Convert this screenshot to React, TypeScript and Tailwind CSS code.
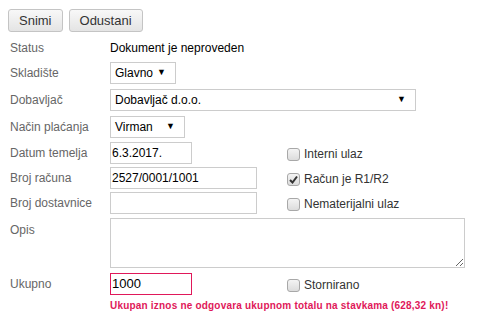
import type { ReactNode } from "react";

function Label({ children }: { children: ReactNode }) {
  return <div className="w-[102px] shrink-0 pl-[2px] text-[#666]">{children}</div>;
}

function Select({ value, width }: { value: string; width: string }) {
  return (
    <div className={`flex h-[22px] items-center justify-between border border-[#ccc] bg-white pl-[4px] pr-[9px] text-black ${width}`}>
      <span>{value}</span>
      <span className="text-[9px]">▼</span>
    </div>
  );
}

function Input({ value = "", width, error = false }: { value?: string; width: string; error?: boolean }) {
  return (
    <div
      className={`flex h-[22px] items-center border pl-[1px] text-black ${width} ${
        error ? "border-[#e0185a] text-[13px]" : "border-[#ccc]"
      }`}
    >
      {value}
    </div>
  );
}

function Check({ label, checked = false }: { label: string; checked?: boolean }) {
  return (
    <div className="flex items-center gap-[4px] text-[#333]">
      <span className="flex h-[13px] w-[13px] items-center justify-center rounded-[3px] border border-[#a8a8a8] bg-gradient-to-b from-[#f4f4f4] to-[#dcdcdc]">
        {checked && (
          <svg width="9" height="9" viewBox="0 0 9 9">
            <path d="M1 5 L3.5 7.5 L8 1.5" fill="none" stroke="#333" strokeWidth="2" />
          </svg>
        )}
      </span>
      {label}
    </div>
  );
}

export default function App() {
  return (
    <div className="h-[322px] w-[482px] bg-white pl-[8px] pt-[9px] text-[12px] text-[#333]" style={{ fontFamily: '"Liberation Sans", Arial, sans-serif' }}>
      <div className="flex gap-[6px]">
        {["Snimi", "Odustani"].map((b) => (
          <button
            key={b}
            className="h-[23px] rounded-[3px] border border-[#c4c4c4] bg-gradient-to-b from-[#f8f8f8] to-[#e4e4e4] px-[10px] text-[13px] text-[#333]"
          >
            {b}
          </button>
        ))}
      </div>

      <div className="mt-[6px] flex h-[20px] items-center">
        <Label>Status</Label>
        <span className="text-black">Dokument je neproveden</span>
      </div>

      <div className="mt-[4px] flex flex-col">
        <div className="flex items-center">
          <Label>Skladište</Label>
          <Select value="Glavno" width="w-[66px]" />
        </div>
        <div className="mt-[5px] flex items-center">
          <Label>Dobavljač</Label>
          <Select value="Dobavljač d.o.o." width="w-[306px]" />
        </div>
        <div className="mt-[5px] flex items-center">
          <Label>Način plaćanja</Label>
          <Select value="Virman" width="w-[75px]" />
        </div>
        <div className="mt-[4px] flex items-center">
          <Label>Datum temelja</Label>
          <Input value="6.3.2017." width="w-[82px]" />
          <div className="ml-[95px] mt-[2px]">
            <Check label="Interni ulaz" />
          </div>
        </div>
        <div className="mt-[3px] flex items-center">
          <Label>Broj računa</Label>
          <Input value="2527/0001/1001" width="w-[147px]" />
          <div className="ml-[30px] mt-[2px]">
            <Check label="Račun je R1/R2" checked />
          </div>
        </div>
        <div className="mt-[3px] flex items-center">
          <Label>Broj dostavnice</Label>
          <Input width="w-[147px]" />
          <div className="ml-[30px] mt-[2px]">
            <Check label="Nematerijalni ulaz" />
          </div>
        </div>
        <div className="mt-[4px] flex items-start">
          <div className="pt-[3px]">
            <Label>Opis</Label>
          </div>
          <textarea className="h-[50px] w-[355px] resize border border-[#ccc] bg-white" />
        </div>
        <div className="mt-[5px] flex items-center">
          <Label>Ukupno</Label>
          <Input value="1000" width="w-[82px]" error />
          <div className="ml-[95px] mt-[2px]">
            <Check label="Stornirano" />
          </div>
        </div>
      </div>

      <div className="mt-[3px] pl-[102px] text-[10px] font-bold tracking-[0.2px] text-[#e0185a]">
        Ukupan iznos ne odgovara ukupnom totalu na stavkama (628,32 kn)!
      </div>
    </div>
  );
}
